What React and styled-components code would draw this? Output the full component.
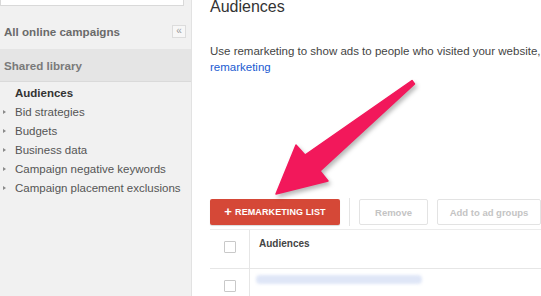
import React from "react";
import styled, { createGlobalStyle } from "styled-components";

const sideItems = [
    "Bid strategies",
    "Budgets",
    "Business data",
    "Campaign negative keywords",
    "Campaign placement exclusions",
];

const App = () => {
    return (
        <>
            <GlobalStyle />
            <Page>
                <Sidebar>
                    <SearchBox />
                    <SideHeader>
                        <SideTitle>All online campaigns</SideTitle>
                        <CollapseButton>«</CollapseButton>
                    </SideHeader>
                    <SharedBand>Shared library</SharedBand>
                    <SideList>
                        <SideItem $active>Audiences</SideItem>
                        {sideItems.map((item) => (
                            <SideItem key={item}>
                                <Caret />
                                {item}
                            </SideItem>
                        ))}
                    </SideList>
                </Sidebar>
                <Main>
                    <Heading>Audiences</Heading>
                    <Description>
                        Use remarketing to show ads to people who visited your website, or
                        used your mobile app. Learn more about
                        <br />
                        <Link>remarketing</Link>
                    </Description>
                    <Toolbar>
                        <PrimaryButton>
                            <Plus>+</Plus> REMARKETING LIST
                        </PrimaryButton>
                        <Divider />
                        <GhostButton $width={69}>Remove</GhostButton>
                        <GhostButton $width={104}>Add to ad groups</GhostButton>
                    </Toolbar>
                    <Table>
                        <HeaderRow>
                            <CheckCell>
                                <Checkbox />
                            </CheckCell>
                            <HeaderCell>Audiences</HeaderCell>
                        </HeaderRow>
                        <Row>
                            <CheckCell>
                                <Checkbox />
                            </CheckCell>
                            <BodyCell>
                                <BlurredName />
                            </BodyCell>
                        </Row>
                    </Table>
                </Main>
                <Arrow viewBox="0 0 541 296" width="541" height="296">
                    <polygon
                        points="412,80.5 305,155 296,145 276,194 328,181 320,171 414.5,84"
                        fill="#f2185b"
                        stroke="#f2185b"
                        strokeWidth="1.5"
                        strokeLinejoin="round"
                    />
                </Arrow>
            </Page>
        </>
    );
};

export default App;

const GlobalStyle = createGlobalStyle`
    html, body {
        margin: 0;
        padding: 0;
        background: #ffffff;
        font-family: "Liberation Sans", Arial, sans-serif;
    }
`;

const Page = styled.div`
    position: relative;
    display: flex;
    width: 541px;
    height: 296px;
    overflow: hidden;
`;

const Sidebar = styled.div`
    width: 191px;
    flex-shrink: 0;
    background: #f1f1f1;
    border-right: 1px solid #e2e2e2;
    display: flex;
    flex-direction: column;
`;

const SearchBox = styled.div`
    width: 182px;
    height: 5px;
    background: #ffffff;
    border: 1px solid #d9d9d9;
    border-top: none;
`;

const SideHeader = styled.div`
    display: flex;
    align-items: center;
    justify-content: space-between;
    height: 32px;
    margin-top: 9px;
    padding: 0 5px 0 4px;
`;

const SideTitle = styled.span`
    font-size: 11.6px;
    font-weight: bold;
    color: #6a6a6a;
`;

const CollapseButton = styled.span`
    width: 12px;
    height: 11px;
    border: 1px solid #dcdcdc;
    background: #f7f7f7;
    color: #9a9a9a;
    font-size: 10px;
    line-height: 10px;
    text-align: center;
`;

const SharedBand = styled.div`
    height: 32px;
    margin-top: 2px;
    display: flex;
    align-items: center;
    padding-left: 4px;
    background: #e5e5e5;
    border-bottom: 1px solid #dadada;
    font-size: 11.6px;
    font-weight: bold;
    color: #7a7a7a;
`;

const SideList = styled.div`
    display: flex;
    flex-direction: column;
    padding-top: 2px;
`;

const SideItem = styled.div`
    position: relative;
    height: 19px;
    line-height: 19px;
    padding-left: 15px;
    font-size: 11.5px;
    font-weight: ${(p) => (p.$active ? "bold" : "normal")};
    color: ${(p) => (p.$active ? "#333333" : "#555555")};
    white-space: nowrap;
`;

const Caret = styled.span`
    position: absolute;
    left: 3px;
    top: 7px;
    width: 0;
    height: 0;
    border-top: 2.5px solid transparent;
    border-bottom: 2.5px solid transparent;
    border-left: 3px solid #8a8a8a;
`;

const Main = styled.div`
    flex: 1;
    padding-left: 18px;
    display: flex;
    flex-direction: column;
    min-width: 0;
`;

const Heading = styled.h1`
    margin: -3px 0 0;
    font-size: 16px;
    line-height: 20px;
    font-weight: normal;
    color: #333333;
`;

const Description = styled.p`
    margin: 26px 0 0;
    font-size: 11.5px;
    line-height: 16px;
    color: #444444;
    white-space: nowrap;
`;

const Link = styled.a`
    color: #1a5bd1;
    text-decoration: none;
`;

const Toolbar = styled.div`
    display: flex;
    align-items: center;
    gap: 9px;
    margin-top: 124px;
    height: 26px;
`;

const PrimaryButton = styled.div`
    width: 130px;
    height: 26px;
    box-sizing: border-box;
    display: flex;
    align-items: center;
    justify-content: center;
    gap: 3px;
    background: #d54837;
    border-radius: 2px;
    color: #ffffff;
    font-size: 9px;
    font-weight: bold;
    letter-spacing: 0.1px;
    box-shadow: 0 1px 1px rgba(0, 0, 0, 0.15);
`;

const Plus = styled.span`
    font-size: 13px;
    font-weight: bold;
    line-height: 1;
    margin-top: -1px;
`;

const Divider = styled.div`
    width: 1px;
    height: 28px;
    background: #e4e4e4;
`;

const GhostButton = styled.div`
    width: ${(p) => p.$width}px;
    height: 26px;
    box-sizing: border-box;
    display: flex;
    align-items: center;
    justify-content: center;
    border: 1px solid #e3e3e3;
    border-radius: 2px;
    background: #ffffff;
    color: #c4c4c4;
    font-size: 9.5px;
    font-weight: bold;
    flex-shrink: 0;
`;

const Table = styled.div`
    margin-top: 4px;
    border-top: 1px solid #ececec;
    width: 400px;
`;

const HeaderRow = styled.div`
    display: flex;
    height: 38px;
    border-bottom: 1px solid #e6e6e6;
`;

const Row = styled.div`
    display: flex;
    height: 30px;
`;

const CheckCell = styled.div`
    width: 40px;
    box-sizing: border-box;
    border-right: 1px solid #e6e6e6;
    display: flex;
    justify-content: center;
    padding-top: 11px;
`;

const Checkbox = styled.div`
    width: 10px;
    height: 10px;
    border: 1px solid #c9c9c9;
    border-radius: 1px;
    background: #ffffff;
`;

const HeaderCell = styled.div`
    padding: 8px 0 0 9px;
    font-size: 10px;
    font-weight: bold;
    color: #444444;
`;

const BodyCell = styled.div`
    padding: 6px 0 0 6px;
`;

const BlurredName = styled.div`
    width: 166px;
    height: 9px;
    border-radius: 4px;
    background: #dfe6f7;
    filter: blur(1.5px);
`;

const Arrow = styled.svg`
    position: absolute;
    left: 0;
    top: 0;
    pointer-events: none;
    filter: drop-shadow(2px 3px 2px rgba(0, 0, 0, 0.28));
`;
